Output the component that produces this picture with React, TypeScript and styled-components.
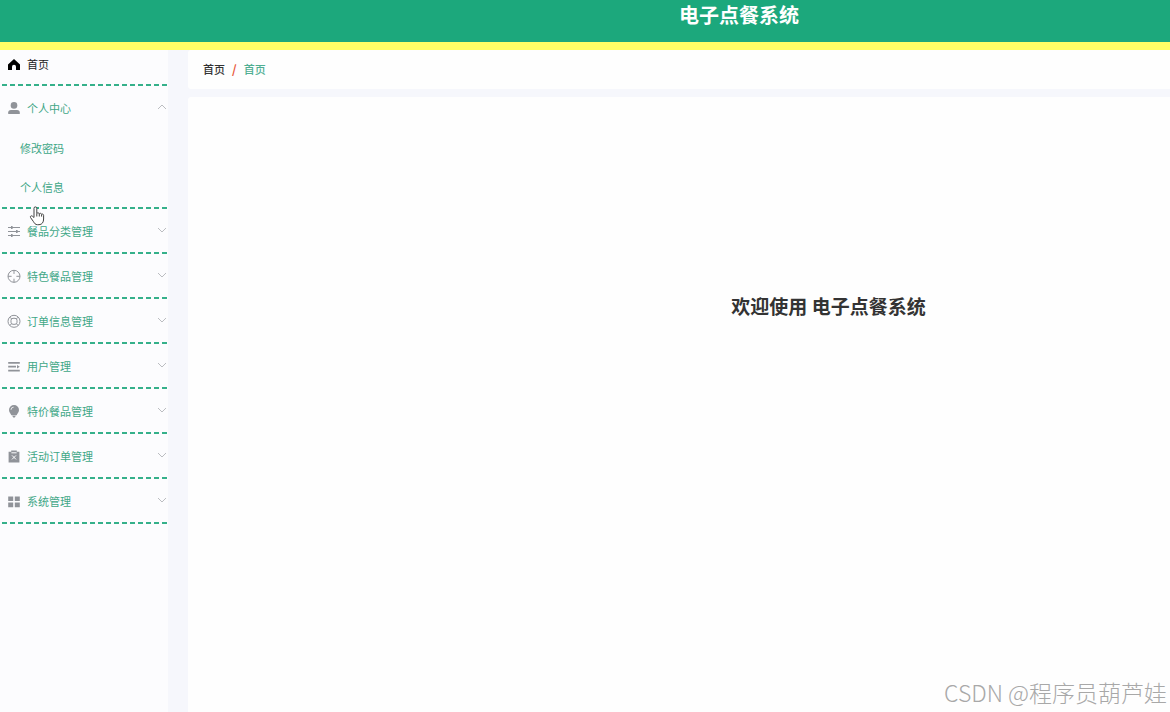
import React from "react";
import styled, { createGlobalStyle } from "styled-components";

const GlobalStyle = createGlobalStyle`
  *, *::before, *::after { box-sizing: border-box; }
  body { margin: 0; background: #f6f7fc; font-family: "Noto Sans CJK SC", sans-serif; }
`;

const Page = styled.div`
  min-height: 100vh;
  display: flex;
  flex-direction: column;
`;

const Header = styled.header`
  height: 50px;
  padding: 3px 0 0 308px;
  background: #1ca87c;
  border-bottom: 8px solid #ffff66;
  text-align: center;
`;

const Brand = styled.h1`
  margin: 0;
  font-size: 20px;
  line-height: 24px;
  font-weight: 700;
  color: #fff;
`;

const Body = styled.div`
  flex: 1;
  display: flex;
`;

const Sidebar = styled.nav`
  width: 168px;
  flex: none;
  padding-right: 1px;
  background: #fcfcfe;
`;

const Group = styled.div`
  padding-bottom: 2px;
  background: repeating-linear-gradient(270deg, #35b08a 0 5px, transparent 5px 8px) left bottom / 100% 2px no-repeat;
`;

const MenuLink = styled.a`
  display: flex;
  align-items: center;
  gap: 6px;
  height: 34px;
  padding: 0 0 6px 7px;
  font-size: 11px;
  color: #222;
  text-decoration: none;
`;

const MenuButton = styled.button`
  display: flex;
  align-items: center;
  gap: 6px;
  width: 100%;
  height: 43px;
  padding: 0 0 0 7px;
  border: 0;
  background: none;
  font: inherit;
  font-size: 11px;
  color: #3fa787;
  text-align: left;
`;

const Label = styled.span`
  flex: 1;
`;

const SubLink = styled.a`
  display: block;
  padding-left: 20px;
  font-size: 11px;
  line-height: 39px;
  color: #3fa787;
  text-decoration: none;
`;

const Content = styled.main`
  flex: 1;
  display: flex;
  flex-direction: column;
  gap: 8px;
  padding-left: 20px;
`;

const Breadcrumb = styled.nav`
  display: flex;
  align-items: center;
  gap: 7px;
  height: 39px;
  padding: 0 0 2px 15px;
  background: #fefefe;
  border-radius: 3px 0 0 3px;
  font-size: 11px;
  font-weight: 500;
  color: #333;
`;

const Slash = styled.span`
  font-size: 12px;
  font-weight: 700;
  color: #e8583a;
`;

const Crumb = styled.a`
  color: #4fae92;
  text-decoration: none;
`;

const Panel = styled.section`
  flex: 1;
  display: flex;
  flex-direction: column;
  justify-content: space-between;
  padding: 195px 0 4px;
  background: #fefefe;
  border-radius: 3px 0 0 0;
`;

const Welcome = styled.h2`
  margin: 0;
  padding-right: 101px;
  padding-left: 400px;
  font-size: 19px;
  line-height: 28px;
  text-align: center;
  color: #333;
`;

const Watermark = styled.p`
  margin: 0;
  padding-right: 3px;
  text-align: right;
  font-size: 23px;
  line-height: 32px;
  font-weight: 300;
  color: #a8a8a8;
`;

const Chevron = styled.svg`
  width: 10px;
  height: 10px;
  margin-bottom: 2px;
  fill: none;
  stroke: #bbbdc1;
`;

const Glyph = styled.svg<{ $dark?: boolean }>`
  width: 14px;
  height: 14px;
  flex: none;
  color: ${(p) => (p.$dark ? "#000" : "#909399")};
  fill: currentColor;
`;

const Cursor = styled.svg`
  position: absolute;
  left: 29px;
  top: 206px;
  width: 16px;
  height: 20px;
  pointer-events: none;
`;

const line = { fill: "none", stroke: "currentColor" };

const icons: Record<string, React.ReactNode> = {
  home: <path d="M7 2 1 7.400V13H5V9.800a2 2 0 0 1 4 0V13h4V7.400Z" />,
  user: (
    <>
      <circle cx="7" cy="4.4" r="3.3" />
      <path d="M1.200 13V11.600Q1.200 9 4 9H10Q12.800 9 12.800 11.600V13Z" />
    </>
  ),
  sliders: (
    <>
      <path d="M1 3.500h12M1 7.500h12M1 11.500h12" {...line} strokeWidth="1" />
      <path d="M4 2h1.600v3H4zM9 6h1.600v3H9zM4 10h1.600v3H4z" />
    </>
  ),
  aim: (
    <g {...line}>
      <circle cx="7" cy="7.300" r="6" />
      <path d="M7 1.300v3.600M7 9.700v3.600M1 7.300h3.600M9.400 7.300H13" />
    </g>
  ),
  help: (
    <g {...line}>
      <circle cx="7" cy="7.300" r="6" />
      <rect x="4" y="4.300" width="6" height="6" rx="2" />
      <path d="M2.800 3.100 4.600 4.900M11.200 3.100 9.400 4.900M2.800 11.500 4.600 9.700M11.200 11.500 9.400 9.700" />
    </g>
  ),
  list: <path d="M1.200 3h11.600v1.800H1.200zM1.200 6.800h7.800v1.800H1.200zM10 6 12.800 7.700 10 9.400zM1.200 10.700h11.600v1.800H1.200z" />,
  bulb: (
    <>
      <path d="M7 1a5 5 0 0 1 5 5c0 2.400-1.600 3.400-2.400 5.200H4.400C3.600 9.400 2 8.400 2 6a5 5 0 0 1 5-5ZM5.200 11.800h3.600L7.800 13.600H6.200Z" />
      <path d="M4 5.800A2.600 2.600 0 0 1 6.600 3.200" fill="none" stroke="#fcfcfe" strokeWidth=".8" />
    </>
  ),
  clipboard: (
    <>
      <path d="M1.600 2.800h2.600V1.400h5.600v1.400h2.600V13.600H1.600Z" />
      <path d="M4.400 3.800h5.200M5 6.400l4 4M9 6.400l-4 4" fill="none" stroke="#fcfcfe" strokeWidth="1" />
    </>
  ),
  grid: <path d="M1.200 2.400h5v4.600h-5zM7.800 2.400h5v4.600h-5zM1.200 8.600h5v4.600h-5zM7.800 8.600h5v4.600h-5z" />,
};

const Icon = ({ name, dark }: { name: string; dark?: boolean }) => (
  <Glyph viewBox="0 0 14 14" $dark={dark} aria-hidden="true">
    {icons[name]}
  </Glyph>
);

interface Entry {
  icon: string;
  label: string;
  children?: string[];
}

const entries: Entry[] = [
  { icon: "user", label: "个人中心", children: ["修改密码", "个人信息"] },
  { icon: "sliders", label: "餐品分类管理" },
  { icon: "aim", label: "特色餐品管理" },
  { icon: "help", label: "订单信息管理" },
  { icon: "list", label: "用户管理" },
  { icon: "bulb", label: "特价餐品管理" },
  { icon: "clipboard", label: "活动订单管理" },
  { icon: "grid", label: "系统管理" },
];

export default function App() {
  return (
    <Page>
      <GlobalStyle />
      <Header>
        <Brand>电子点餐系统</Brand>
      </Header>
      <Body>
        <Sidebar>
          <Group>
            <MenuLink href="#home">
              <Icon name="home" dark />
              <Label>首页</Label>
            </MenuLink>
          </Group>
          {entries.map(({ icon, label, children }) => (
            <Group key={label}>
              <MenuButton type="button" aria-expanded={!!children}>
                <Icon name={icon} />
                <Label>{label}</Label>
                <Chevron viewBox="0 0 10 10" aria-hidden="true">
                  <path d={children ? "M1 7l4-4 4 4" : "M1 3l4 4 4-4"} />
                </Chevron>
              </MenuButton>
              {children?.map((child) => (
                <SubLink key={child} href="#sub">
                  {child}
                </SubLink>
              ))}
            </Group>
          ))}
        </Sidebar>
        <Content>
          <Breadcrumb>
            <span>首页</span>
            <Slash>/</Slash>
            <Crumb href="#home">首页</Crumb>
          </Breadcrumb>
          <Panel>
            <Welcome>欢迎使用 电子点餐系统</Welcome>
            <Watermark>CSDN @程序员葫芦娃</Watermark>
          </Panel>
        </Content>
      </Body>
      <Cursor viewBox="0 0 16 20" aria-hidden="true">
        <path
          d="M5 11.500V2.300a1.400 1.400 0 0 1 2.800 0V7.500c.4-1 2.400-.8 2.500.3.500-.9 2.200-.6 2.300.6.600-.7 2-.3 2 .9V13c0 3-1.400 5.700-4.600 5.700H8.500c-2.200 0-3-1.400-4-3L1.500 11.500c-.6-1.200.8-2.300 1.900-1.300Z"
          fill="#fff"
          stroke="#444"
        />
        <path d="M7.800 7.500v3M10.300 8v2.500M12.600 8.600v2" stroke="#444" fill="none" />
      </Cursor>
    </Page>
  );
}
